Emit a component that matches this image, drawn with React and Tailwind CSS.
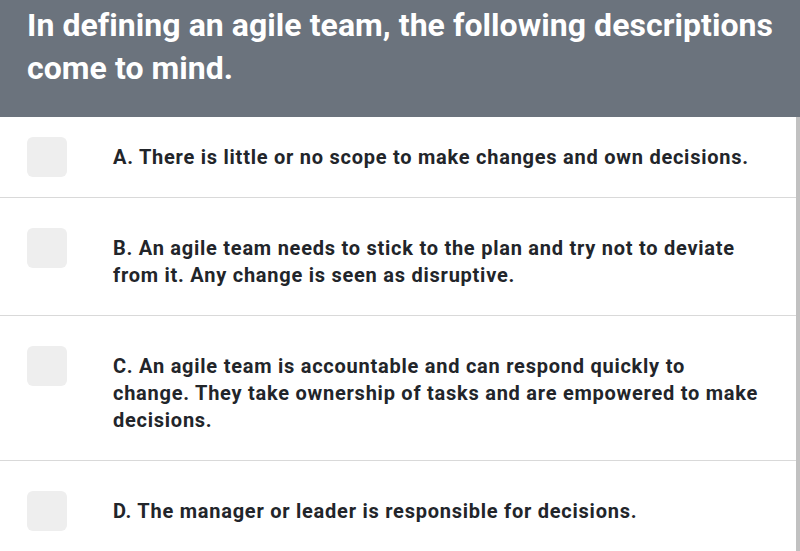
import React from 'react';

const options = [
  { id: 'A', lines: ['A. There is little or no scope to make changes and own decisions.'], first: true },
  { id: 'B', lines: ['B. An agile team needs to stick to the plan and try not to deviate', 'from it. Any change is seen as disruptive.'] },
  {
    id: 'C',
    lines: [
      'C. An agile team is accountable and can respond quickly to',
      'change. They take ownership of tasks and are empowered to make',
      'decisions.',
    ],
  },
  { id: 'D', lines: ['D. The manager or leader is responsible for decisions.'] },
];

const font = { fontFamily: 'Roboto, "Liberation Sans", sans-serif' };

const OptionRow = ({ option, last }) => (
  <div
    className={`flex items-start pl-[27px] pr-1 ${option.first ? 'py-5' : 'pt-[30px] pb-[26px]'} ${last ? '' : 'border-b border-[#d9d9d9]'}`}
  >
    <div className="w-10 h-10 shrink-0 rounded-md bg-[#eeeeee]" />
    <p className="ml-[46px] mt-[7px] text-[20px] leading-[27px] tracking-[0.75px] font-bold text-[#22252a] whitespace-nowrap">
      {option.lines.map((l, i) => (
        <React.Fragment key={i}>
          {i > 0 && <br />}
          {l}
        </React.Fragment>
      ))}
    </p>
  </div>
);

export default function App() {
  return (
    <div className="w-[800px] h-[551px] overflow-hidden bg-white flex flex-col" style={font}>
      {/* Question header */}
      <div className="bg-[#6b737d] pl-[27px] pr-1 pt-[4px] pb-[27px]">
        <h1 className="text-white font-bold text-[32px] leading-[43px] tracking-[0.05px] whitespace-nowrap">
          In defining an agile team, the following descriptions
          <br />
          come to mind.
        </h1>
      </div>

      <div className="flex flex-1 min-h-0">
        {/* Options */}
        <div className="flex-1 flex flex-col">
          {options.map((o, i) => (
            <OptionRow key={o.id} option={o} last={i === options.length - 1} />
          ))}
        </div>
        {/* scrollbar edge */}
        <div className="w-1 bg-[#c1c1c1]" />
      </div>
    </div>
  );
}
